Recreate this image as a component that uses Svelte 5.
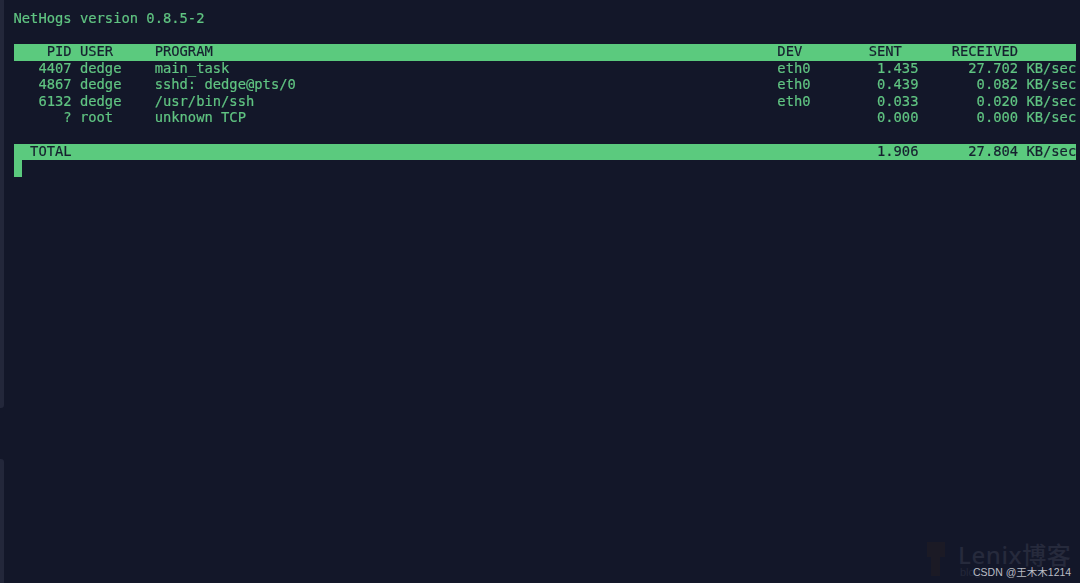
<script>
  const rows = [
    { pid: '4407', user: 'dedge', program: 'main_task', dev: 'eth0', sent: '1.435', received: '27.702' },
    { pid: '4867', user: 'dedge', program: 'sshd: dedge@pts/0', dev: 'eth0', sent: '0.439', received: '0.082' },
    { pid: '6132', user: 'dedge', program: '/usr/bin/ssh', dev: 'eth0', sent: '0.033', received: '0.020' },
    { pid: '?', user: 'root', program: 'unknown TCP', dev: '', sent: '0.000', received: '0.000' }
  ];

  function line(r) {
    return (
      r.pid.padStart(7) + ' ' +
      r.user.padEnd(8) + ' ' +
      r.program.padEnd(74) + ' ' +
      r.dev.padEnd(4) +
      r.sent.padStart(13) +
      r.received.padStart(12) + ' KB/sec'
    );
  }

  const header = '    PID USER     PROGRAM'.padEnd(92) + 'DEV        SENT      RECEIVED';
  const total = '  TOTAL'.padEnd(104) + '1.906' + '27.804'.padStart(12) + ' KB/sec';
</script>

<div class="screen">
  <div class="edge top"></div>
  <div class="edge bottom"></div>

  <div class="term">
    <div class="line">NetHogs version 0.8.5-2</div>
    <div class="line"> </div>
    <div class="line bar">{header}</div>
    {#each rows as r}
      <div class="line">{line(r)}</div>
    {/each}
    <div class="line"> </div>
    <div class="line bar">{total}</div>
    <div class="line"><span class="cursor"> </span></div>
  </div>

  <div class="watermark">
    <svg class="mark" width="22" height="38" viewBox="0 0 22 38">
      <path d="M2 2h18v15h-5v19H6V17H2z" fill="#1b1a25" />
    </svg>
    <span class="lenix">Lenix博客</span>
    <span class="blog">blog.</span>
    <span class="csdn">CSDN @王木木1214</span>
  </div>
</div>

<style>
  :global(body) {
    margin: 0;
    background: #131729;
  }

  .screen {
    position: relative;
    width: 1080px;
    height: 583px;
    overflow: hidden;
    background: #131729;
  }

  .edge {
    position: absolute;
    left: 0;
    width: 4px;
    background: #23273a;
  }

  .edge.top {
    top: 0;
    height: 408px;
    border-bottom-right-radius: 3px;
  }

  .edge.bottom {
    top: 459px;
    bottom: 0;
    border-top-right-radius: 3px;
  }

  .term {
    padding: 10.8px 0 0 13.5px;
    width: 1062.4px;
    font-family: "DejaVu Sans Mono", "Liberation Mono", monospace;
    font-size: 13.8px;
    letter-spacing: -0.004px;
    line-height: 15px;
    color: #60c482;
    -webkit-text-stroke: 0.2px;
    filter: blur(0.3px);
  }

  .line {
    height: 16.6px;
    white-space: pre;
  }

  .bar {
    background: #5bca7e;
    color: #16202f;
  }

  .cursor {
    display: inline-block;
    width: 8.3px;
    height: 16.6px;
    background: #5bca7e;
  }

  .watermark .mark {
    position: absolute;
    left: 925px;
    top: 540px;
  }

  .lenix {
    position: absolute;
    left: 958px;
    top: 536px;
    font-family: "Noto Sans", "Noto Sans CJK SC", sans-serif;
    font-size: 24px;
    letter-spacing: 0.6px;
    font-weight: 500;
    color: #262a3c;
    white-space: nowrap;
  }

  .blog {
    position: absolute;
    left: 960px;
    top: 566px;
    font-family: "Liberation Sans", sans-serif;
    font-size: 11px;
    color: #23273a;
    white-space: nowrap;
  }

  .csdn {
    position: absolute;
    left: 973px;
    top: 565px;
    font-family: "Liberation Sans", "Noto Sans CJK SC", sans-serif;
    font-size: 10.5px;
    line-height: 15px;
    color: #b9bcc4;
    white-space: nowrap;
  }
</style>
